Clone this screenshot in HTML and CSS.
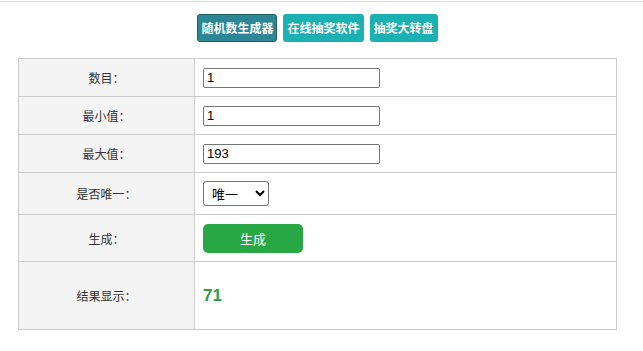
FILE: index.html
```html
<!DOCTYPE html>
<html lang="zh-CN">
<head>
    <meta charset="UTF-8">
    <meta name="viewport" content="width=device-width, initial-scale=1.0">
    <title>随机数生成器</title>
    <link rel="stylesheet" href="styles.css">
</head>
<body>
    <div class="top-line"></div>
    <div class="tool-nav">
        <a class="nav-btn current" href="#">随机数生成器</a>
        <a class="nav-btn" href="#">在线抽奖软件</a>
        <a class="nav-btn" href="#">抽奖大转盘</a>
    </div>

    <div class="form-wrap">
        <table class="gen-table">
            <tr class="row-input">
                <td class="label">数目：</td>
                <td class="field"><input type="text" class="num-input" value="1"></td>
            </tr>
            <tr class="row-input">
                <td class="label">最小值：</td>
                <td class="field"><input type="text" class="num-input" value="1"></td>
            </tr>
            <tr class="row-input">
                <td class="label">最大值：</td>
                <td class="field"><input type="text" class="num-input" value="193"></td>
            </tr>
            <tr class="row-select">
                <td class="label">是否唯一：</td>
                <td class="field">
                    <select class="unique-select">
                        <option>唯一</option>
                        <option>可重复</option>
                    </select>
                </td>
            </tr>
            <tr class="row-btn">
                <td class="label">生成：</td>
                <td class="field"><button type="button" class="gen-btn">生成</button></td>
            </tr>
            <tr class="row-result">
                <td class="label">结果显示：</td>
                <td class="field"><span class="result">71</span></td>
            </tr>
        </table>
    </div>
</body>
</html>
```

FILE: styles.css
```css
body {
    margin: 0;
    font-family: "Liberation Sans", "Noto Sans CJK SC", sans-serif;
    background: #ffffff;
    color: #333333;
}
.top-line {
    margin-top: 1px;
    border-top: 1px solid #dcdcdc;
}
.tool-nav {
    display: flex;
    justify-content: center;
    gap: 6px;
    margin-top: 12px;
    padding-right: 8px;
}
.nav-btn {
    display: inline-block;
    height: 28px;
    line-height: 28px;
    padding: 0 4px;
    box-sizing: border-box;
    font-family: "Noto Sans CJK SC", sans-serif;
    font-size: 12px;
    font-weight: bold;
    color: #ffffff;
    text-decoration: none;
    background: #1bb0b1;
    border-radius: 3px;
}
.nav-btn.current {
    background: #2c8693;
    border: 1px solid #1f5f68;
    padding: 0 3px;
    line-height: 26px;
}
.form-wrap {
    padding: 16px 26px 0 18px;
}
.gen-table {
    width: 100%;
    border-collapse: collapse;
    border: 1px solid #cccccc;
}
.gen-table td {
    border: 1px solid #cccccc;
    padding: 0 8px;
}
.label {
    width: 159px;
    background: #f4f4f4;
    text-align: center;
    font-family: "Noto Sans CJK SC", sans-serif;
    font-size: 12px;
    color: #333333;
}
.row-input td {
    height: 37px;
}
.row-select td {
    height: 41px;
}
.row-btn td {
    height: 46px;
}
.row-result td {
    height: 67px;
}
.num-input {
    width: 177px;
    height: 20px;
    box-sizing: border-box;
    border: 1px solid #767676;
    border-radius: 2px;
    padding: 0 3px;
    font-family: "Liberation Sans", sans-serif;
    font-size: 13px;
    color: #000000;
}
.unique-select {
    width: 66px;
    height: 25px;
    border: 1px solid #767676;
    border-radius: 3px;
    padding-left: 4px;
    font-family: "Noto Sans CJK SC", sans-serif;
    font-size: 13px;
    color: #000000;
    background: #ffffff;
}
.gen-btn {
    width: 100px;
    height: 29px;
    border: none;
    border-radius: 5px;
    background: #28a745;
    color: #ffffff;
    font-family: "Noto Sans CJK SC", sans-serif;
    font-size: 13px;
    cursor: pointer;
}
.result {
    font-family: "Liberation Sans", sans-serif;
    font-size: 17px;
    font-weight: bold;
    color: #2e9e47;
}
```
